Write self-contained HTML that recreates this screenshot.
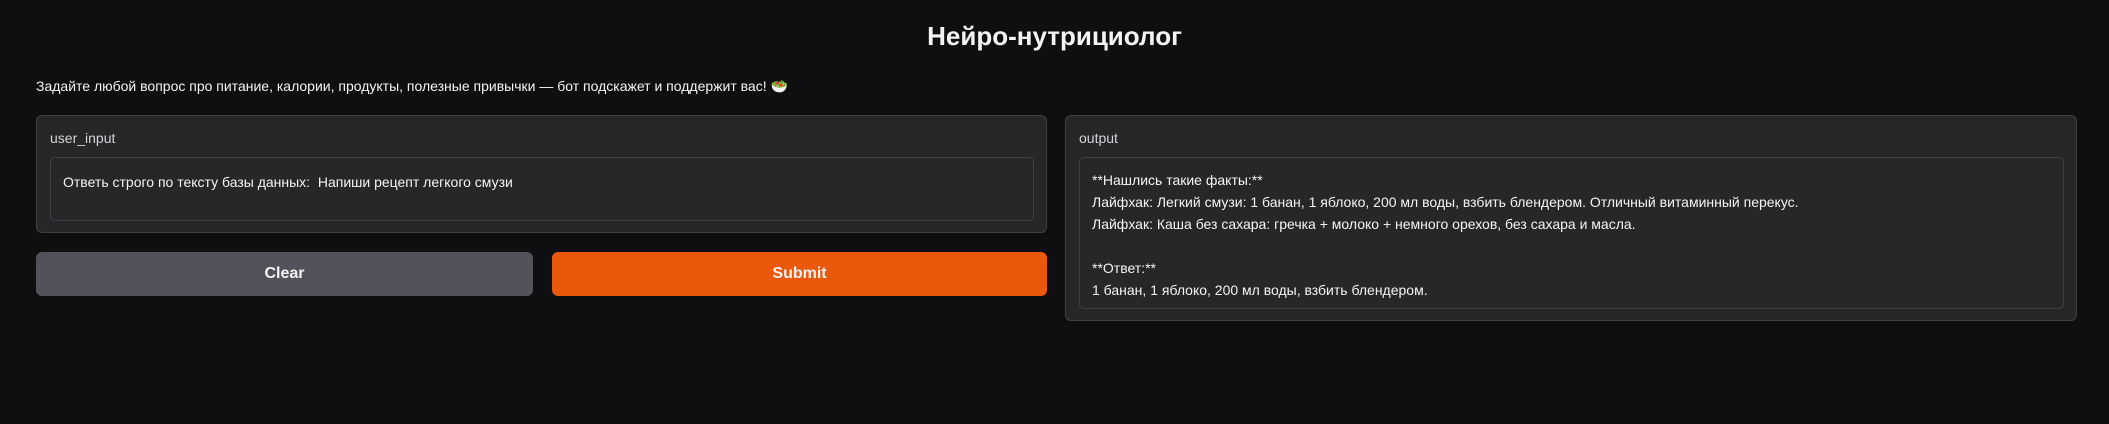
<!DOCTYPE html>
<html><head><meta charset="utf-8"><style>
*{box-sizing:border-box;margin:0;padding:0}
body{width:2109px;height:424px;background:#0f0f11;font-family:"Liberation Sans","DejaVu Sans",sans-serif;color:#f4f4f5;position:relative;overflow:hidden}
.title{position:absolute;left:0;width:2109px;top:20px;text-align:center;font-size:26px;font-weight:bold;line-height:32px}
.desc{position:absolute;left:36px;top:76px;font-size:14px;line-height:20px}
.panel{position:absolute;background:#27272a;border:1px solid #3f3f46;border-radius:6px}
.lab{position:absolute;left:13px;top:14px;font-size:14px;color:#d4d4d8}
.box{position:absolute;border:1px solid #3f3f46;border-radius:5px;background:#27272a;font-size:14px;line-height:22px;padding:11px 12px}
.btn{position:absolute;top:252px;height:44px;border-radius:6px;font-size:16px;font-weight:bold;text-align:center;line-height:44px}
</style></head><body>
<div class="title">Нейро-нутрициолог</div>
<div class="desc">Задайте любой вопрос про питание, калории, продукты, полезные привычки — бот подскажет и поддержит вас! 🥗</div>
<div class="panel" style="left:36px;top:115px;width:1011px;height:118px">
<div class="lab">user_input</div>
<div class="box" style="left:13px;top:41px;width:984px;height:64px;padding-top:13px">Ответь строго по тексту базы данных:&nbsp; Напиши рецепт легкого смузи</div>
</div>
<div class="btn" style="left:36px;width:497px;background:#52525b">Clear</div>
<div class="btn" style="left:552px;width:495px;background:#ea580c">Submit</div>
<div class="panel" style="left:1065px;top:115px;width:1012px;height:206px">
<div class="lab">output</div>
<div class="box" style="left:13px;top:41px;width:985px;height:152px">**Нашлись такие факты:**<br>Лайфхак: Легкий смузи: 1 банан, 1 яблоко, 200 мл воды, взбить блендером. Отличный витаминный перекус.<br>Лайфхак: Каша без сахара: гречка + молоко + немного орехов, без сахара и масла.<br><br>**Ответ:**<br>1 банан, 1 яблоко, 200 мл воды, взбить блендером.</div>
</div>
</body></html>
